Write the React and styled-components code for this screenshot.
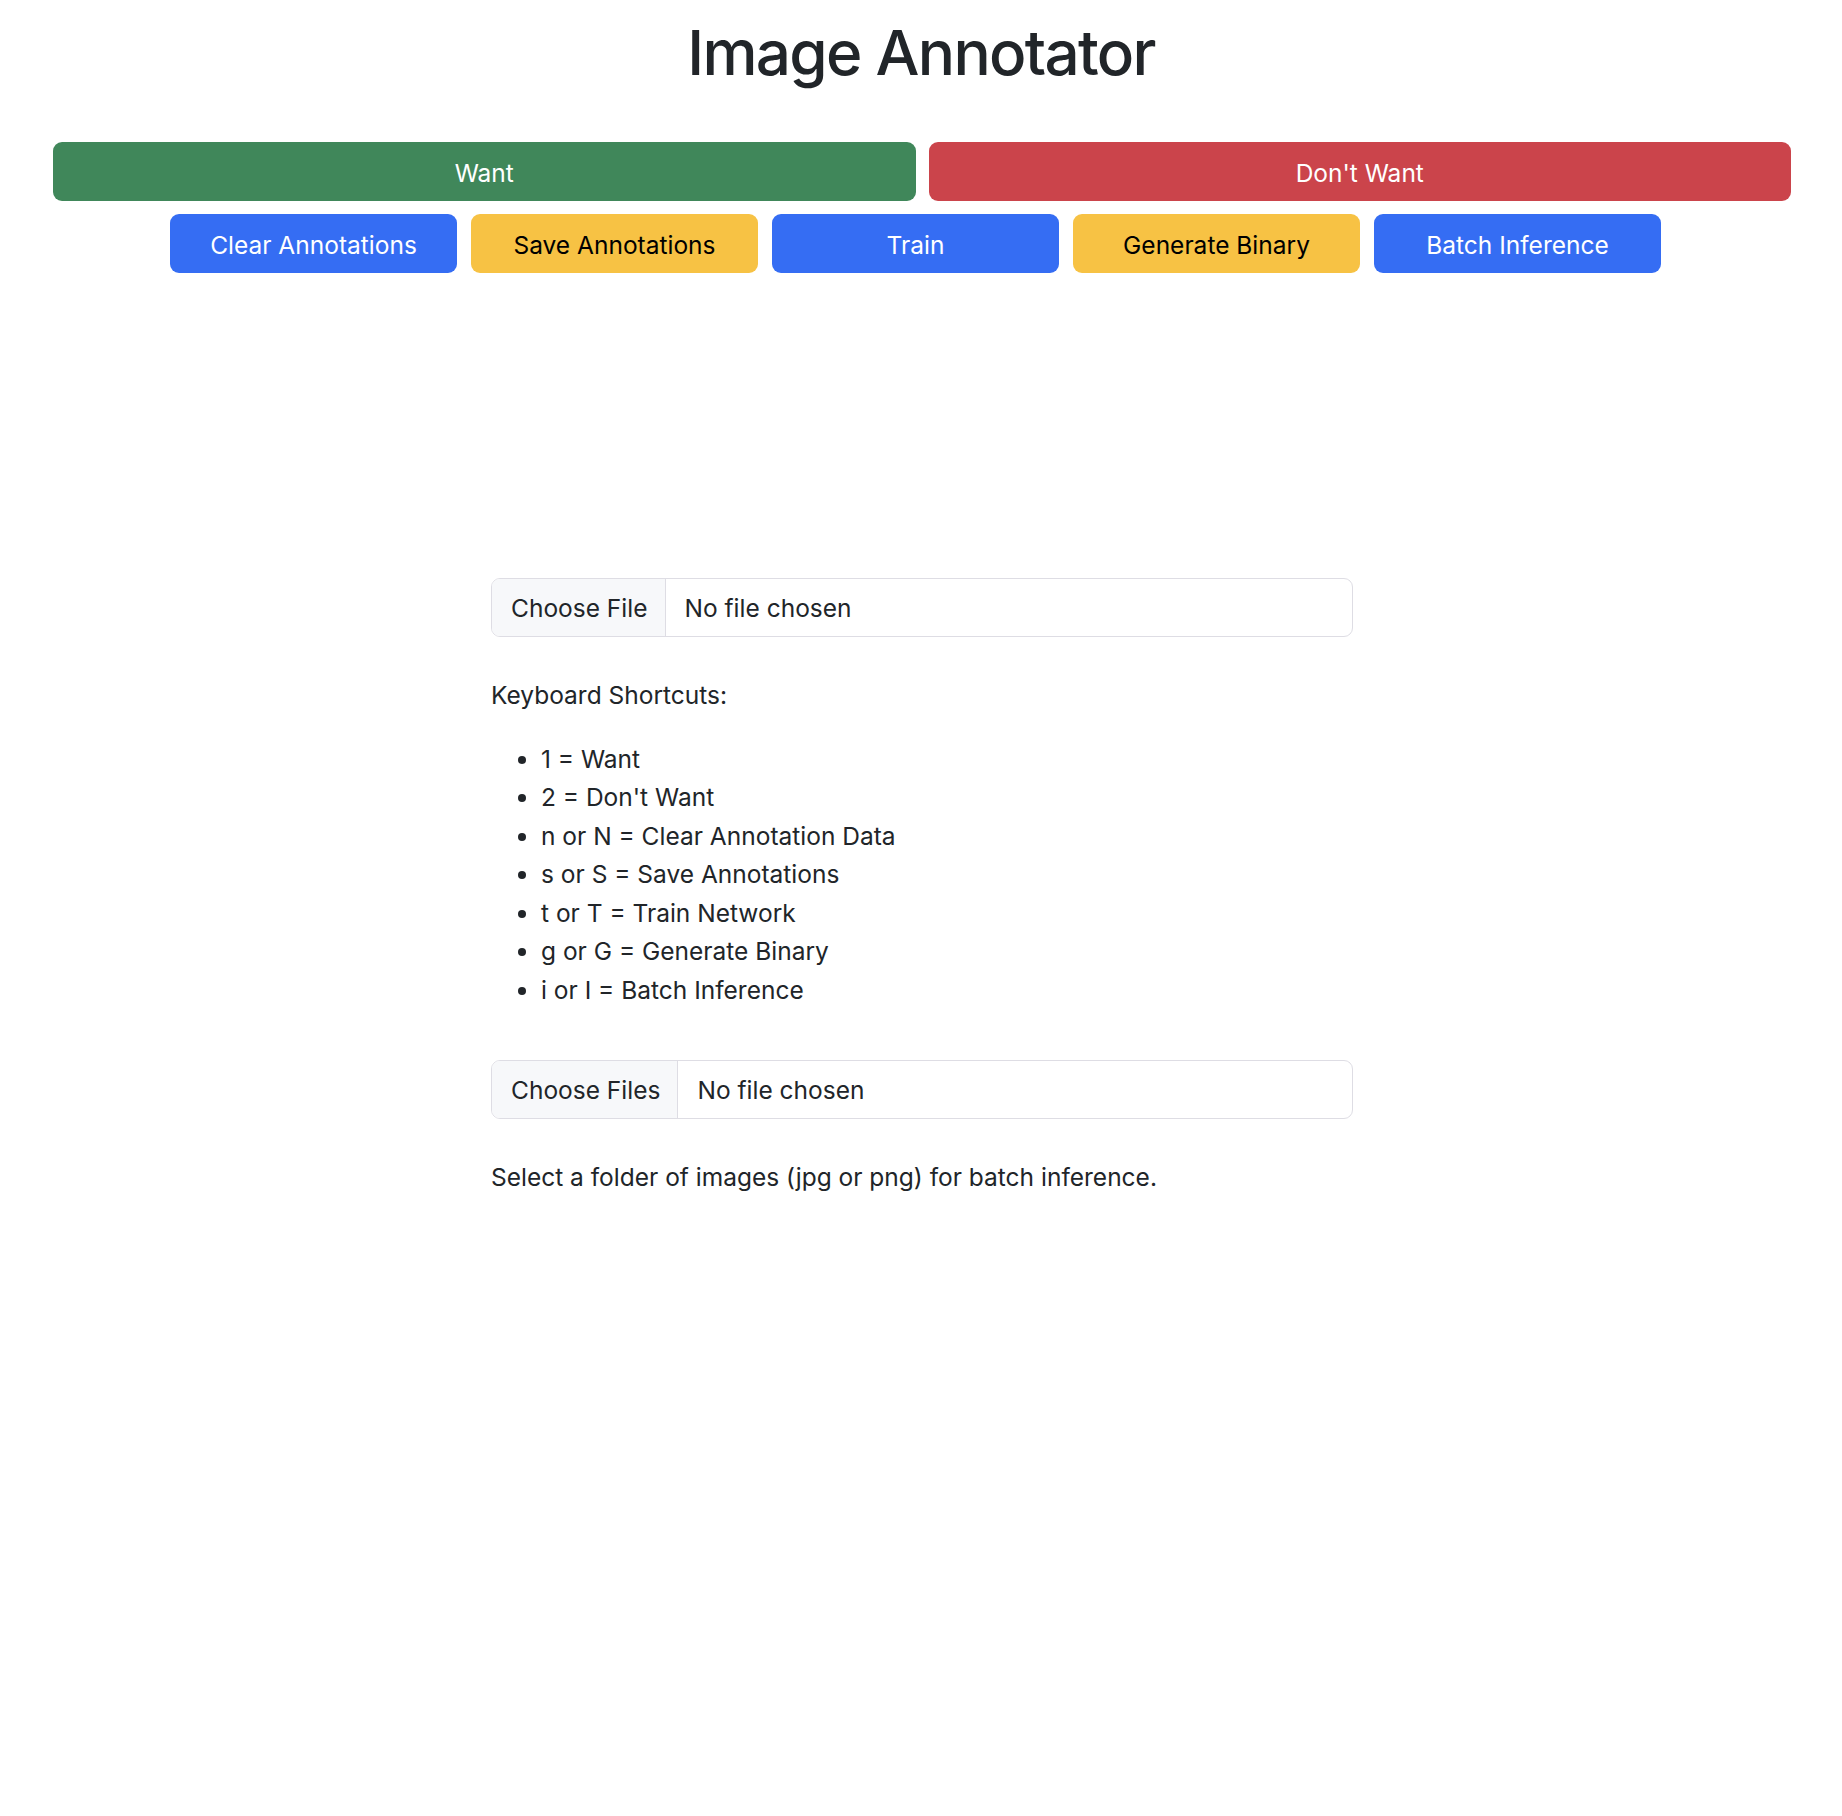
import React from "react";
import styled, { createGlobalStyle } from "styled-components";

const GlobalStyle = createGlobalStyle`
  * {
    box-sizing: border-box;
  }
  body {
    margin: 0;
    background: #ffffff;
    color: #212529;
    font-family: Inter, "Noto Sans", "Liberation Sans", sans-serif;
    font-size: 24.5px;
    line-height: 38.5px;
  }
`;

const Page = styled.div`
  width: 100%;
  min-height: 1816px;
  padding-top: 16px;
`;

const Title = styled.h1`
  margin: 0;
  text-align: center;
  font-size: 62px;
  line-height: 74px;
  font-weight: 500;
  letter-spacing: -1.7px;
  color: #212529;
`;

const LabelRow = styled.div`
  display: flex;
  gap: 13px;
  margin: 52px 51px 0 53px;
`;

const ActionRow = styled.div`
  display: flex;
  justify-content: center;
  gap: 14px;
  margin-top: 13px;
  padding-right: 11px;
`;

const palette = {
  success: { bg: "#40875a", fg: "#ffffff" },
  danger: { bg: "#cb444b", fg: "#ffffff" },
  primary: { bg: "#356df3", fg: "#ffffff" },
  warning: { bg: "#f7c244", fg: "#000000" },
};

const Button = styled.button`
  flex: ${(p) => (p.$wide ? "1 1 0" : "0 0 287px")};
  height: 59px;
  padding: 3px 18px 0;
  border: none;
  border-radius: 9px;
  background: ${(p) => palette[p.$variant].bg};
  color: ${(p) => palette[p.$variant].fg};
  font-family: inherit;
  font-size: 24.5px;
  line-height: 38.5px;
  font-weight: 400;
  cursor: pointer;
`;

// empty area where the image canvas sits before a file is loaded
const CanvasArea = styled.div`
  height: 305px;
`;

const Panel = styled.div`
  width: 862px;
  margin-left: 491px;
`;

const FilePicker = styled.label`
  display: flex;
  align-items: stretch;
  height: 59px;
  border: 1px solid #dedde4;
  border-radius: 9px;
  overflow: hidden;
  background: #ffffff;
  cursor: pointer;
  margin-bottom: ${(p) => p.$gap}px;

  input {
    display: none;
  }
`;

const PickerButton = styled.span`
  display: flex;
  align-items: center;
  padding: 2px 17px 0 19px;
  background: #f7f8fa;
  border-right: 1px solid #dedde4;
  white-space: nowrap;
`;

const PickerText = styled.span`
  display: flex;
  align-items: center;
  padding: 2px 0 0 19px;
`;

const Text = styled.p`
  margin: 0 0 25px;
`;

const ShortcutList = styled.ul`
  margin: 0 0 50px;
  padding-left: 50px;

  li {
    line-height: 38.6px;
  }
`;

const shortcuts = [
  "1 = Want",
  "2 = Don't Want",
  "n or N = Clear Annotation Data",
  "s or S = Save Annotations",
  "t or T = Train Network",
  "g or G = Generate Binary",
  "i or I = Batch Inference",
];

const App = () => {
  return (
    <>
      <GlobalStyle />
      <Page>
        <Title>Image Annotator</Title>
        <LabelRow>
          <Button $wide $variant="success">Want</Button>
          <Button $wide $variant="danger">Don't Want</Button>
        </LabelRow>
        <ActionRow>
          <Button $variant="primary">Clear Annotations</Button>
          <Button $variant="warning">Save Annotations</Button>
          <Button $variant="primary">Train</Button>
          <Button $variant="warning">Generate Binary</Button>
          <Button $variant="primary">Batch Inference</Button>
        </ActionRow>
        <CanvasArea />
        <Panel>
          <FilePicker $gap={39}>
            <input type="file" accept="image/*" />
            <PickerButton>Choose File</PickerButton>
            <PickerText>No file chosen</PickerText>
          </FilePicker>
          <Text>Keyboard Shortcuts:</Text>
          <ShortcutList>
            {shortcuts.map((s) => (
              <li key={s}>{s}</li>
            ))}
          </ShortcutList>
          <FilePicker $gap={39}>
            <input type="file" multiple />
            <PickerButton>Choose Files</PickerButton>
            <PickerText>No file chosen</PickerText>
          </FilePicker>
          <Text>Select a folder of images (jpg or png) for batch inference.</Text>
        </Panel>
      </Page>
    </>
  );
};

export default App;
